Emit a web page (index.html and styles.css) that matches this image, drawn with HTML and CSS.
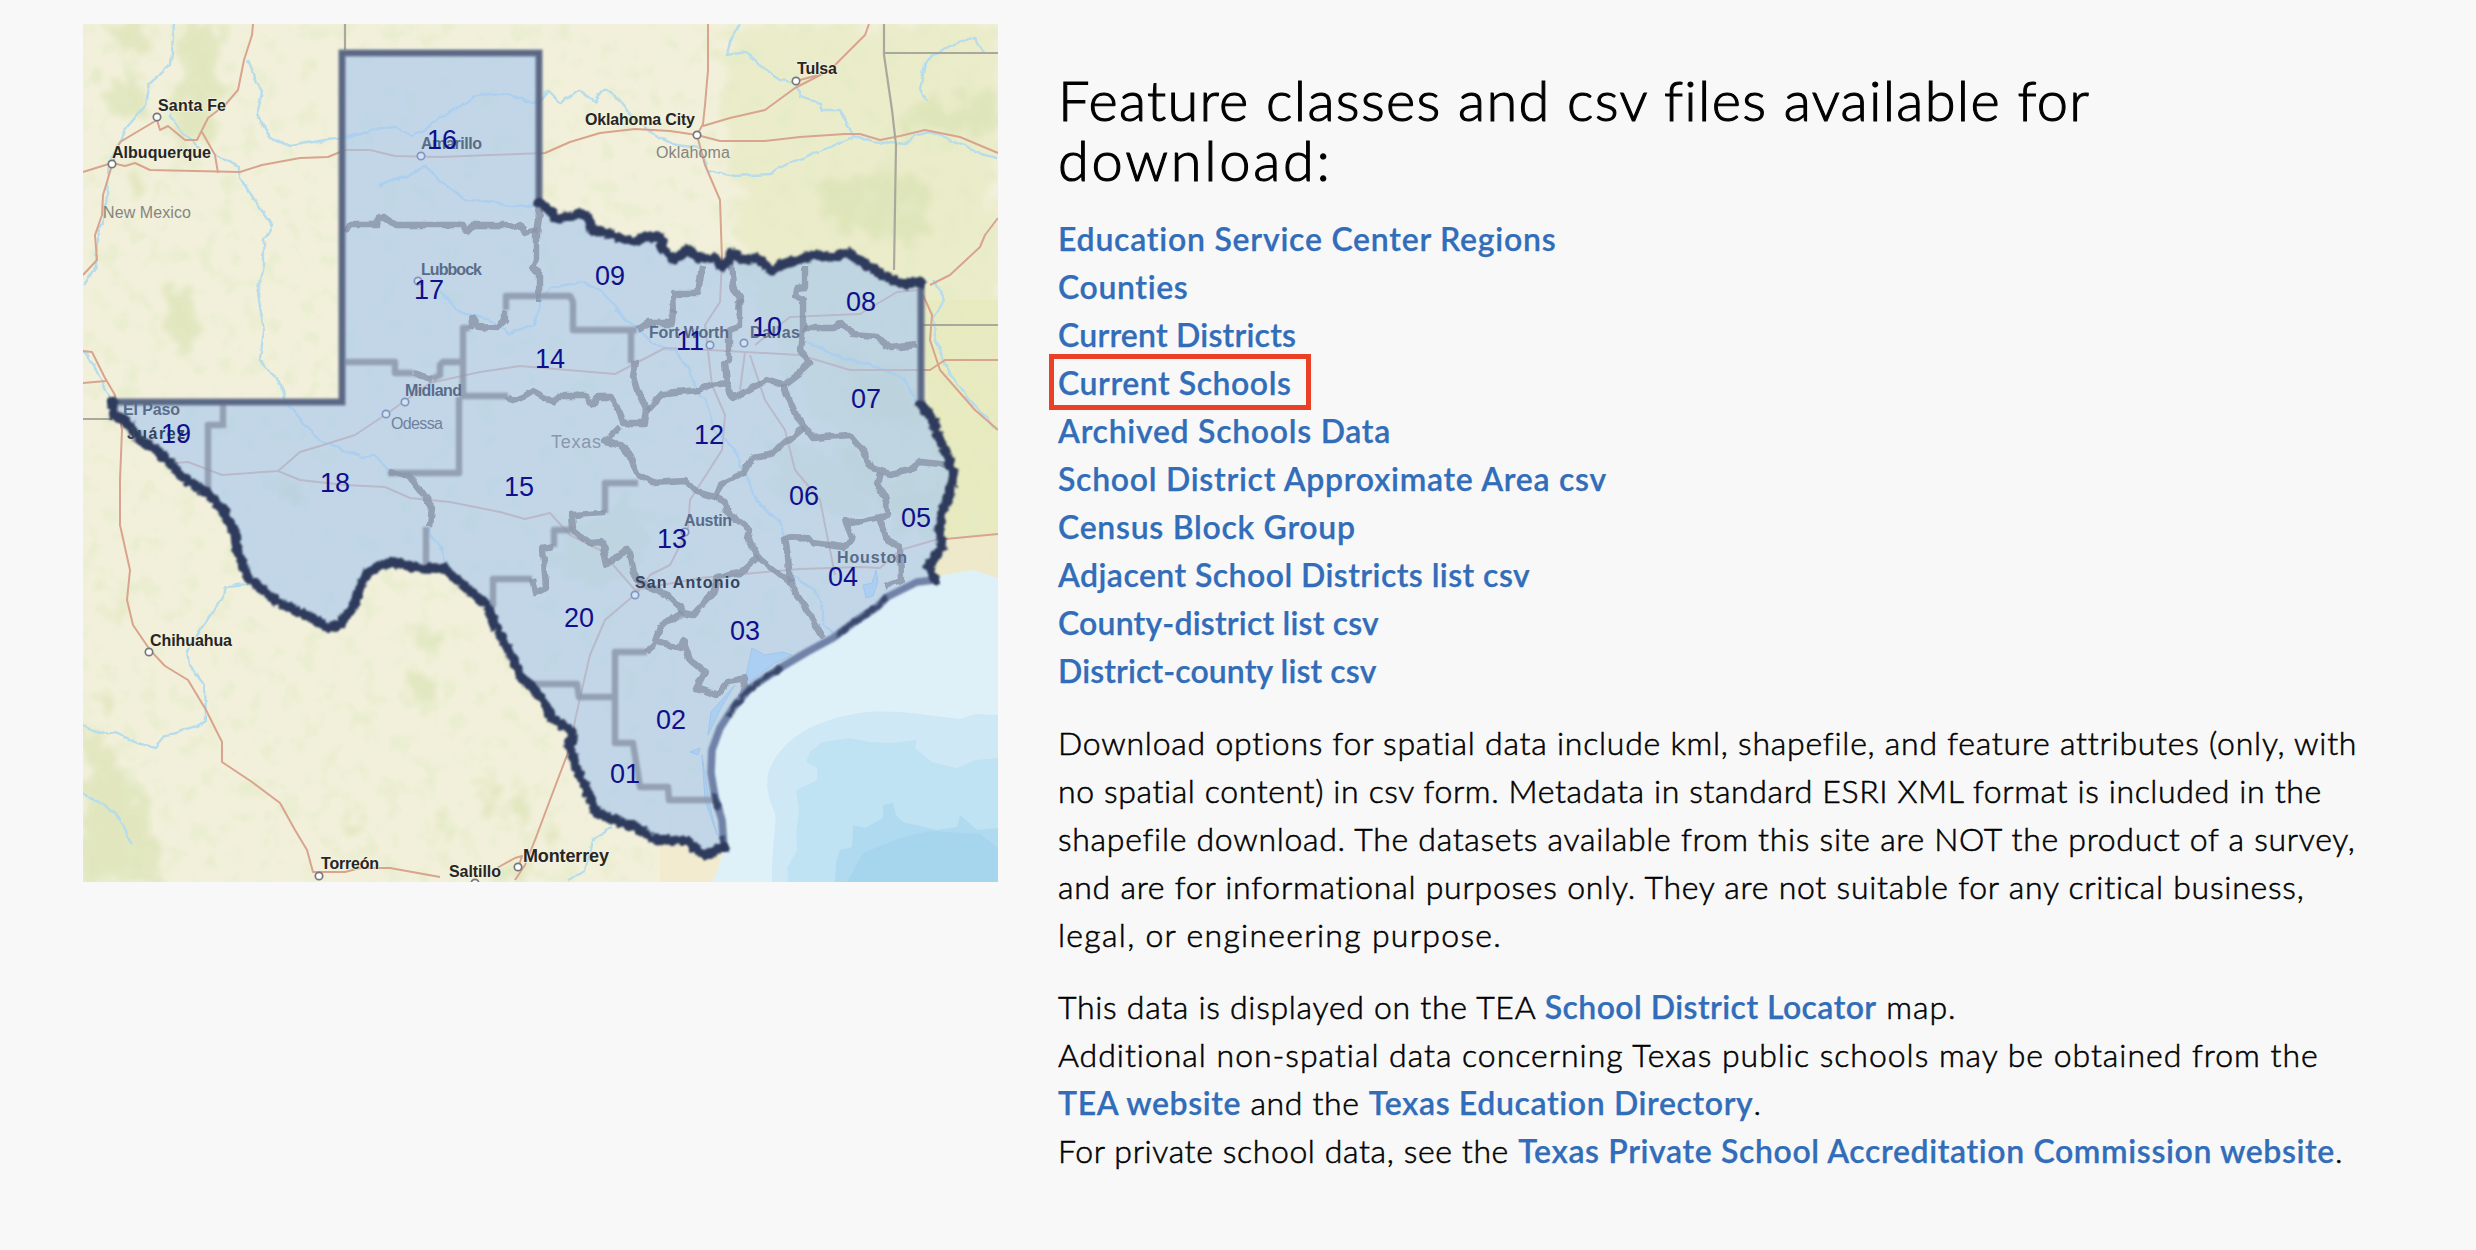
FILE: index.html
```
<!DOCTYPE html>
<html lang="en">
<head>
<meta charset="utf-8">
<title>Feature classes and csv files</title>
<link rel="stylesheet" href="styles.css">
</head>
<body>
<main class="page">
<svg class="map" viewBox="83 24 915 858" width="915" height="858" role="img">
  <defs>
    <filter id="rough" x="-5%" y="-5%" width="110%" height="110%">
      <feTurbulence type="fractalNoise" baseFrequency="0.16" numOctaves="2" seed="4"/>
      <feDisplacementMap in="SourceGraphic" scale="7" xChannelSelector="R" yChannelSelector="G"/>
      <feGaussianBlur stdDeviation="0.9"/>
    </filter>
    <filter id="wiggle" x="-5%" y="-5%" width="110%" height="110%">
      <feTurbulence type="fractalNoise" baseFrequency="0.08" numOctaves="2" seed="9"/>
      <feDisplacementMap in="SourceGraphic" scale="6" xChannelSelector="R" yChannelSelector="G"/>
      <feGaussianBlur stdDeviation="0.6"/>
    </filter>
    <filter id="terrain" x="-10%" y="-10%" width="120%" height="120%">
      <feTurbulence type="fractalNoise" baseFrequency="0.05" numOctaves="4" seed="12" result="n"/>
      <feDisplacementMap in="SourceGraphic" in2="n" scale="45" xChannelSelector="R" yChannelSelector="G"/>
      <feGaussianBlur stdDeviation="3"/>
    </filter>
    <filter id="shade" x="0" y="0" width="100%" height="100%">
      <feTurbulence type="fractalNoise" baseFrequency="0.05 0.045" numOctaves="5" seed="21"/>
      <feColorMatrix values="0 0 0 0 .76  0 0 0 0 .83  0 0 0 0 .56  4 0 0 0 -2"/>
      <feGaussianBlur stdDeviation="0.8"/>
    </filter>
    <filter id="soft"><feGaussianBlur stdDeviation="0.8"/></filter>
    <filter id="faint"><feGaussianBlur stdDeviation="0.5"/></filter>
    <path id="state" d="M343 53H539V203L547 208 557 218 572 217 582 213 588 218 592 230 607 233 620 238 635 242 645 237 660 237 663 248 673 260 688 250 700 258 715 258 723 268 733 253 743 260 757 258 772 271 785 263 802 259 817 255 833 257 848 253 863 263 877 272 893 280 903 284 921 282V405L932 417 937 433 945 450 953 473 950 493 943 510 940 527 942 547 928 567 935 580 917 582 887 597 877 607 857 620 833 638 807 652 780 668 750 688 733 708 720 728 712 750 711 773 715 797 722 820 724 847 705 855 687 841 653 839 638 828 620 822 597 813 590 797 577 770 570 747 572 732 553 718 537 692 522 678 507 647 493 620 487 605 473 594 457 580 445 568 420 568 392 562 367 572 358 593 353 607 338 627 327 627 307 615 277 602 248 577 237 550 235 533 223 510 207 493 183 477 160 453 140 440 127 422 113 415 112 402H342Z"/>
  </defs>

  <rect x="83" y="24" width="915" height="858" fill="#f2f0db"/>
  <path d="M720 24H998V560L880 520 800 380 740 270Z" fill="#ebecca" filter="url(#terrain)"/>
  <path d="M921 300H998V535L940 540Z" fill="#e8eabf"/>
  <path d="M940 538L998 533V582H930Z" fill="#efe9cb"/>
  <g class="terrain" filter="url(#terrain)">
    <path d="M175 24H225L212 60 222 100 205 135 180 150 165 120 185 75Z"/>
    <path d="M100 24H140L155 45 135 50 110 42ZM100 80L140 80 155 100 145 120 110 110Z"/>
    <path d="M130 165H142L134 205 127 205ZM172 290L192 278 195 345 172 350 165 330Z"/>
    <path d="M83 725L105 740 140 795 165 882H83Z"/>
    <path d="M96 692L112 686 108 712ZM112 600L122 604 118 640ZM405 625L445 630 445 650 420 655ZM408 660L422 670 430 710 418 712Z"/>
    <path d="M475 775L488 790 500 820 490 815ZM510 775L520 790 530 825 520 820ZM540 825L555 835 550 850ZM500 870L525 868 530 882H495Z"/>
    <path d="M820 190L870 165 930 185 930 235 880 240 830 220ZM900 110L998 90V135L900 130Z"/>
    <path d="M276 482L300 485 304 505 280 500ZM92 575L115 590 120 605Z"/>
    <path d="M350 790L358 825 350 835ZM440 800L448 830 440 840Z"/>
  </g>
  <g class="terrain pale-green" filter="url(#terrain)">
    <path d="M765 440L860 455 890 500 850 520 780 500ZM830 350L910 370 930 440 860 420ZM540 560L630 490 650 560 600 590ZM890 480L930 480 935 540 900 530Z"/>
  </g>
  <rect x="83" y="24" width="915" height="858" filter="url(#shade)" opacity=".5"/>

  <path d="M935 580L943 575 973 570 998 578V882H708L715 877 722 857 724 847 722 820 715 797 711 773 712 750 720 728 733 708 750 688 780 668 807 652 833 638 857 620 877 607 887 597 917 582Z" fill="#def0f8"/>
  <g filter="url(#faint)">
    <path d="M772 882C772 840 777 825 775 813 764 790 767 775 770 768 785 735 820 718 867 712 900 710 925 715 943 717L960 719 975 714 1000 715V882Z" fill="#cfe8f6"/>
    <path d="M788 882L787 868 797 850 796 833 799 810 796 790 817 780V768L806 762 810 752 822 742 850 738 870 742 890 743 917 740 915 748 932 762 957 768 975 760 998 758V882Z" fill="#c0e3f4"/>
    <path d="M835 882L836 862 840 850 852 847 853 825 865 828 883 818V805L893 803 896 815 903 822 937 830 957 827 960 815 977 830 998 828V882Z" fill="#b0daef"/>
    <path d="M847 882L863 853 903 837 930 831 980 834 998 848V882Z" fill="#a6d6ed"/>
  </g>
  <path d="M710 882L717 872 722 855 706 850 690 841 660 838 660 882Z" fill="#f3ebcf"/>

  <g class="rivers" filter="url(#wiggle)">
    <path d="M174 24L171 65 149 84 145 105 128 125 120 142 109 163 104 215 97 240 96 265 83 285"/>
    <path d="M248 60L262 92 257 115 270 138 290 146 325 140 343 139 370 130 395 128 413 136 425 130 438 117 455 110 473 97 490 93 510 95 530 102 540 101 548 91 560 103 572 95 580 91 595 102 605 89 620 100 635 120 655 135 675 145 700 148"/>
    <path d="M171 115L180 130 200 148 M214 154L229 162 240 166 240 178 258 205 272 225 264 240 264 265 258 295 264 330 260 360 282 385 285 400 300 420 320 440 345 450 362 457 375 455 388 470"/>
    <path d="M378 186L410 175 425 166 440 181 465 200 485 201 515 207 540 205"/>
    <path d="M740 24L730 40 727 55 745 52 765 70 780 80 796 82 800 97 820 103 822 110 840 110 853 135 880 145 890 142 905 144 915 135 932 132 950 140 965 145 980 155 998 159"/>
    <path d="M700 150L708 170 735 176 770 174 795 161 830 147 853 137M985 52L975 38 945 48 925 64 920 90 928 102"/>
    <path d="M615 310L637 328 655 345 675 350 690 370 697 390 705 400 715 430 735 450 745 475 760 505 778 520 788 545 792 575 815 590 823 610 823 625 833 634"/>
    <path d="M540 302L550 288 580 282 600 290 620 312M440 290L460 312 490 320 510 334 535 325 541 302M803 341L850 360 880 368 905 380 915 400 922 404"/>
    <path d="M933 280L944 300 934 318 935 340 950 375 970 400 998 430M83 350L96 370 112 402"/>
    <path d="M248 585L225 587 222 600 200 630 188 650 190 665 205 685 206 720 196 727 175 733 165 735 155 747 130 740 115 732 95 733 83 725M83 794L105 805 120 818 131 844"/>
    <path d="M390 473L410 478 420 490 432 510 430 535 443 550 445 565M612 827L592 840 585 872 568 880"/>
  </g>
  <g class="bays">
    <path d="M863 585L872 583 876 570 878 582 873 596 866 598ZM752 648L765 655 782 652 792 655 775 663 750 682 746 676ZM735 685L722 706 708 735 711 712Z"/>
    <path d="M702 755L705 800 717 835 712 815 708 795ZM690 752L700 748 698 755Z"/>
  </g>
  <g class="roads" filter="url(#faint)">
    <path d="M83 172L112 163 125 166 135 163 150 170 240 172 262 165 300 158 328 157 345 150 370 150 395 156 440 157 490 155 545 153 570 142 600 133 635 129 670 131 697 135 720 141 765 141 800 137 845 134 860 134 880 140 900 136 925 130 960 137 998 153"/>
    <path d="M253 24L252 35 244 60 238 90 225 105 208 118 197 140 185 140 168 126 160 130 157 120 120 142 112 165 103 195 102 215 95 235 97 260 83 275M202 132L215 155 218 173"/>
    <path d="M83 351L92 352 105 378 115 395 122 430 120 480 120 525 130 570 127 600 133 625 150 650 165 666 188 680 206 710 222 742V762L252 782 280 803 295 830 307 850 313 872H345L360 868 390 868 440 877M83 383L106 381"/>
    <path d="M708 24V70L705 105 703 124 697 135 705 165 720 200 722 260 720 302 705 325 712 385 725 415 722 450 690 500 688 530 670 565 650 575 638 592 605 620 590 655 575 720 572 742 550 800 535 840 525 865 515 880M869 24L865 35 830 70 795 88 765 110 730 118 703 126M796 81L815 76 830 70"/>
    <path d="M175 463L188 462 222 475 278 471 300 452 320 446 355 435 385 415 430 383 480 372 520 366 615 374 665 348 710 350 745 352 800 355 850 370 930 370 945 360 998 360"/>
    <path d="M278 471L300 480 345 485 385 487 410 498 450 502 500 512 525 519 550 513 570 535 600 550 635 590 700 578 800 569 860 567 880 568 900 550 935 540 998 534"/>
    <path d="M745 352L740 390M750 355L765 400 785 430 795 470 820 500 830 550 835 575M930 285L950 275 980 247 985 235 998 218M923 295L932 315 930 340 940 370 975 410 998 430M755 345L790 317 860 314 897 292 920 290"/>
    <path d="M497 868L515 858 522 856 518 868"/>
  </g>
  <path class="stateline" d="M884 24V55L892 110 896 145 894 270M884 53H998M345 24V50M83 419H112M922 325H998"/>

  <g class="town soft">
    <circle cx="157" cy="117" r="3.7"/><circle cx="112" cy="164" r="3.7"/><circle cx="796" cy="81" r="3.7"/><circle cx="697" cy="135" r="3.7"/>
    <circle cx="149" cy="652" r="3.7"/><circle cx="319" cy="876" r="3.7"/><circle cx="518" cy="867" r="3.7"/><circle cx="475" cy="883" r="3.7"/>
  </g>

  <use href="#state" fill="#a5c6f0" fill-opacity=".62"/>

  <g class="town faded">
    <circle cx="421" cy="156" r="3.7"/><circle cx="418" cy="281" r="3.7"/><circle cx="405" cy="402" r="3.7"/><circle cx="386" cy="414" r="3.7"/>
    <circle cx="710" cy="345" r="3.7"/><circle cx="744" cy="343" r="3.7"/><circle cx="635" cy="595" r="3.7"/><circle cx="685" cy="532" r="3.7"/>
  </g>

  <g class="region" filter="url(#wiggle)">
    <path d="M346 232L350 225H377L378 218H385L395 225H463L467 231 473 225 507 225 515 228 521 225 525 233 537 230"/>
    <path d="M540 205L536 233V260L533 268 539 272V302M674 313L673 293H698L702 267M738 310L740 297 733 287 731 262"/>
    <path d="M505 310V320L497 328 478 327 473 318 470 328M432 379L413 373M637 329L648 323 672 323 673 310"/>
    <path d="M508 396L513 401 523 397 533 391 553 402 558 396H585L593 405 598 397H612L620 413 623 423H645L647 410 637 390 633 377 636 363H631"/>
    <path d="M647 410L663 393 700 390 710 385 727 383 725 363 729 360V330L740 327V300M727 383L733 398 767 380 783 385 800 372 810 363 800 350 803 328V300L795 295 796 288 805 287V265"/>
    <path d="M803 328H833L842 323 852 334 877 336 890 348 917 345M783 385L797 417 805 427 813 438 850 435 863 450 872 468 890 474 910 470 920 462 950 465"/>
    <path d="M805 427L770 455 753 458 743 473 720 485 715 497 697 492 685 480 653 482 638 475 628 453 620 445 605 442 620 427"/>
    <path d="M605 513L572 515 573 530 590 543 602 542 607 565 628 548 633 573 647 587 667 595 680 607 682 613 693 615 713 593 718 577 740 573 758 557"/>
    <path d="M553 547L543 549 546 588 535 593 532 579M715 497L725 502 727 512 750 530 748 540 758 557 790 582 805 607 823 638"/>
    <path d="M790 582L788 557 785 538 807 537 812 543 843 547 853 540 845 520 853 523 888 515 887 500 877 483 880 473M878 517L887 540 900 547 901 580 885 586"/>
    <path d="M682 613L660 627 653 647 647 652M657 642L680 648 683 640 690 660 705 672 697 688 717 695 727 682 745 678 740 697"/>
    <path d="M390 472L410 477 420 490 432 507 430 527"/>
  </g>
  <g class="region" filter="url(#soft)">
    <path d="M345 362H395V373H413M432 379L440 375V365L443 362H462M470 328H463V397M459 397V473H388M462 396H508M506 310V296H553L557 296H570L573 302V330H637M631 330V363"/>
    <path d="M638 483H605V513M573 530H554V547M532 579H493V607M426 527V567M223 403V428M222 425H208V490"/>
    <path d="M647 652H615V743H633L640 787H668L669 800H715M533 684H577L579 697H615"/>
  </g>

  <g filter="url(#soft)">
    <path class="edge coast" d="M935 580L917 582 887 597 877 607 857 620 833 638 807 652 780 668 750 688 733 708 720 728 712 750 711 773 715 797 722 820 724 847"/>
    <path class="edge straight" d="M112 402H342V53H539V203M921 282V405"/>
    <path class="inner" d="M112 402H342V53H539V203M921 282V405"/>
  </g>
  <g filter="url(#rough)">
    <path class="edge" d="M539 203L547 208 557 218 572 217 582 213 588 218 592 230 607 233 620 238 635 242 645 237 660 237 663 248 673 260 688 250 700 258 715 258 723 268 733 253 743 260 757 258 772 271 785 263 802 259 817 255 833 257 848 253 863 263 877 272 893 280 903 284 921 282"/>
    <path class="edge" d="M921 405L932 417 937 433 945 450 953 473 950 493 943 510 940 527 942 547 928 567 935 580"/>
    <path class="edge" d="M724 847L705 855 687 841 653 839 638 828 620 822 597 813 590 797 577 770 570 747 572 732 553 718 537 692 522 678 507 647 493 620 487 605 473 594 457 580 445 568 420 568 392 562 367 572 358 593 353 607 338 627 327 627 307 615 277 602 248 577 237 550 235 533 223 510 207 493 183 477 160 453 140 440 127 422 113 415 112 402"/>
    <path class="edge thin" d="M887 597L877 607 857 620 838 635M780 668L750 688 733 708 729 715M714 795L718 808M723 838L724 847"/>
  </g>

  <g class="labels city">
    <text x="158" y="111" textLength="68">Santa Fe</text>
    <text x="112" y="158" textLength="99">Albuquerque</text>
    <text x="585" y="125" textLength="110">Oklahoma City</text>
    <text x="797" y="74" textLength="40">Tulsa</text>
    <text x="150" y="646" textLength="82">Chihuahua</text>
    <text x="321" y="869" textLength="58">Torreón</text>
    <text x="523" y="862" textLength="86" class="large">Monterrey</text>
    <text x="449" y="877" textLength="52">Saltillo</text>
  </g>
  <g class="labels dim">
    <text x="103" y="218" textLength="88">New Mexico</text>
    <text x="656" y="158" textLength="74">Oklahoma</text>
    <text x="551" y="448" textLength="50" class="pale large">Texas</text>
    <text x="391" y="429" textLength="52" class="odessa">Odessa</text>
  </g>
  <g class="labels inside">
    <text x="421" y="149" textLength="61">Amarillo</text>
    <text x="421" y="275" textLength="61">Lubbock</text>
    <text x="405" y="396" textLength="57">Midland</text>
    <text x="649" y="338" textLength="80">Fort Worth</text>
    <text x="750" y="338" textLength="50">Dallas</text>
    <text x="123" y="415" textLength="57">El Paso</text>
    <text x="127" y="439" textLength="58" class="dark">Juárez</text>
    <text x="684" y="526" textLength="48">Austin</text>
    <text x="635" y="588" textLength="105" class="dark">San Antonio</text>
    <text x="837" y="563" textLength="70">Houston</text>
  </g>
  <g class="labels number">
    <text x="442" y="149">16</text><text x="429" y="299">17</text><text x="610" y="285">09</text><text x="861" y="311">08</text>
    <text x="767" y="336">10</text><text x="690" y="350">11</text><text x="550" y="368">14</text><text x="866" y="408">07</text>
    <text x="176" y="443">19</text><text x="335" y="492">18</text><text x="519" y="496">15</text><text x="709" y="444">12</text>
    <text x="804" y="505">06</text><text x="916" y="527">05</text><text x="672" y="548">13</text><text x="843" y="586">04</text>
    <text x="579" y="627">20</text><text x="745" y="640">03</text><text x="671" y="729">02</text><text x="625" y="783">01</text>
  </g>
</svg>

<section class="content">
  <h1><span class="h-a">Feature classes and csv files available for</span><br><span class="h-b">download:</span></h1>
  <ul class="downloads">
    <li><a class="s8">Education Service Center Regions</a></li>
    <li><a class="s6">Counties</a></li>
    <li><a class="s3">Current Districts</a></li>
    <li class="marked"><a class="s5">Current Schools</a></li>
    <li><a class="s7">Archived Schools Data</a></li>
    <li><a class="s7">School District Approximate Area csv</a></li>
    <li><a class="s7">Census Block Group</a></li>
    <li><a class="s4">Adjacent School Districts list csv</a></li>
    <li><a class="s2">County-district list csv</a></li>
    <li><a class="s1">District-county list csv</a></li>
  </ul>
  <p>
    <span class="s8">Download options for spatial data include kml, shapefile, and feature attributes (only, with</span><br>
    <span class="s6">no spatial content) in csv form. Metadata in standard ESRI XML format is included in the</span><br>
    <span class="s7">shapefile download. The datasets available from this site are NOT the product of a survey,</span><br>
    <span class="s8">and are for informational purposes only. They are not suitable for any critical business,</span><br>
    <span class="s12">legal, or engineering purpose.</span>
  </p>
  <p>
    <span class="s7">This data is displayed on the TEA </span><a class="s4">School District Locator</a><span class="s9"> map.</span><br>
    <span class="s10">Additional non-spatial data concerning Texas public schools may be obtained from the</span><br>
    <a class="s6">TEA website</a><span class="s6"> and the </span><a class="s6">Texas Education Directory</a>.<br>
    <span class="s6">For private school data, see the </span><a class="s6">Texas Private School Accreditation Commission website</a>.
  </p>
</section>
</main>
</body>
</html>
```
FILE: styles.css
```
* { box-sizing: border-box; }
body { margin: 0; background: #f8f8f8; color: #000; font-family: Lato, "Open Sans", sans-serif; }
.page { display: flex; align-items: flex-start; gap: 60px; min-height: 1250px; padding: 24px 83px 0; }
.map { flex: none; display: block; font-family: "Liberation Sans", Arial, sans-serif; }

.content { flex: none; width: 1335px; padding-top: 46px; font-size: 32px; line-height: 48px; font-weight: 300; -webkit-text-stroke: .55px currentColor; }
.content h1 { margin: 0 0 25px; font-size: 56px; line-height: 60px; font-weight: 300; white-space: nowrap; -webkit-text-stroke: 1.1px currentColor; }
.content p { margin: 24px 0 0; white-space: nowrap; }
.content a { color: #326db9; font-weight: 600; -webkit-text-stroke: .25px currentColor; }
.downloads { list-style: none; margin: 0; padding: 0; }
.marked { position: relative; }
.marked::after { content: ""; box-sizing: border-box; position: absolute; left: -9px; top: -5px; width: 262px; height: 56px; border: 5px solid #ea4025; }

.h-a { letter-spacing: 1.28px; }
.h-b { letter-spacing: 2.7px; }
.s1 { letter-spacing: .1px; }
.s2 { letter-spacing: .18px; }
.s3 { letter-spacing: .2px; }
.s4 { letter-spacing: .43px; }
.s5 { letter-spacing: .54px; }
.s6 { letter-spacing: .62px; }
.s7 { letter-spacing: .71px; }
.s8 { letter-spacing: .76px; }
.s9 { letter-spacing: .95px; }
.s10 { letter-spacing: .98px; }
.s12 { letter-spacing: 1.3px; }

.terrain { fill: #dae3b4; opacity: .7; }
.pale-green { opacity: .45; }
.rivers { fill: none; stroke: #b7ddec; stroke-width: 2.4; }
.bays { fill: #b5dcf6; stroke: #9dc3de; stroke-width: 1; }
.roads { fill: none; stroke: #d9a48d; stroke-width: 2; stroke-linejoin: round; }
.stateline { fill: none; stroke: #aaa89c; stroke-width: 2.2; }
.town { fill: #fff; stroke: #77777a; stroke-width: 1.7; }
.faded { fill: #d3e2f1; stroke: #8096c0; }
.region { fill: none; stroke: #8c97aa; stroke-opacity: .85; stroke-width: 6.4; stroke-linejoin: round; }
.edge { fill: none; stroke: #2d3a5b; stroke-width: 9.5; stroke-linejoin: round; stroke-linecap: round; }
.straight { stroke: #66738f; stroke-linecap: square; stroke-linejoin: miter; stroke-width: 7; }
.inner { fill: none; stroke: #56637f; stroke-width: 2.6; }
.coast { stroke: #7082a8; stroke-width: 7.5; }
.thin { stroke-width: 5; opacity: .8; }

.labels { font-size: 16px; }
.city { font-weight: 700; fill: #262624; stroke: #f5f2df; stroke-width: 1.5px; paint-order: stroke; }
.large { font-size: 18px; }
.dim { fill: #85857d; }
.pale { fill: #8997ae; }
.odessa { fill: #71819b; }
.inside { fill: #5a6b88; font-weight: 700; }
.dark { fill: #36445d; }
.number { fill: #10108c; font-size: 27px; text-anchor: middle; }
```
